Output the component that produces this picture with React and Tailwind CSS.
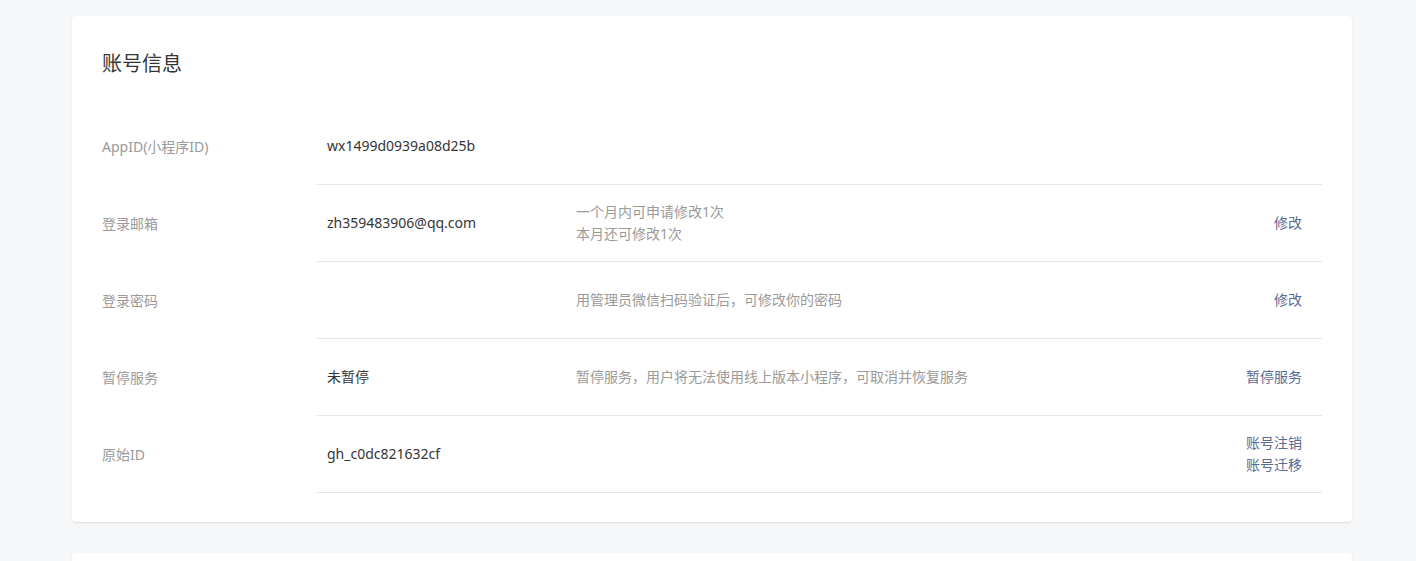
import React from 'react';

const rows = [
  { label: 'AppID(小程序ID)', value: 'wx1499d0939a08d25b', desc: [], actions: [] },
  { label: '登录邮箱', value: 'zh359483906@qq.com', desc: ['一个月内可申请修改1次', '本月还可修改1次'], actions: ['修改'] },
  { label: '登录密码', value: '', desc: ['用管理员微信扫码验证后，可修改你的密码'], actions: ['修改'] },
  { label: '暂停服务', value: '未暂停', desc: ['暂停服务，用户将无法使用线上版本小程序，可取消并恢复服务'], actions: ['暂停服务'] },
  { label: '原始ID', value: 'gh_c0dc821632cf', desc: [], actions: ['账号注销', '账号迁移'] },
];

function Row({ row }) {
  return (
    <div className="flex items-stretch h-[77px]">
      <div className="w-[215px] flex items-center text-[14px] leading-[22px] text-[#9a9a9a]">
        {row.label}
      </div>
      <div className="flex-1 flex items-center border-b border-[#e7e7eb]">
        <div className="w-[259px] pl-[10px] text-[14px] leading-[22px] text-[#353535]">{row.value}</div>
        <div className="flex-1 text-[14px] leading-[22px] text-[#9a9a9a]">
          {row.desc.map((d) => (
            <div key={d}>{d}</div>
          ))}
        </div>
        <div className="pr-[20px] flex flex-col items-end text-[14px] leading-[22px] text-[#576b95]">
          {row.actions.map((a) => (
            <a key={a} href="#" className="cursor-pointer">{a}</a>
          ))}
        </div>
      </div>
    </div>
  );
}

export default function App() {
  return (
    <div
      className="min-h-screen bg-[#f6f7f9] pt-[16px] px-[72px]"
      style={{ fontFamily: '"Noto Sans", "Noto Sans CJK SC", sans-serif' }}
    >
      <div className="w-[1280px] bg-white rounded-[4px] shadow-[0_1px_2px_rgba(0,0,0,0.1)] px-[30px] pt-[32px] pb-[29px]">
        <h2 className="text-[20px] leading-[32px] text-[#353535] font-normal mb-[28px]">账号信息</h2>
        <div>
          {rows.map((r) => (
            <Row key={r.label} row={r} />
          ))}
        </div>
      </div>
      <div className="w-[1280px] bg-white rounded-[4px] shadow-[0_1px_2px_rgba(0,0,0,0.1)] mt-[31px] h-[200px]" />
    </div>
  );
}
